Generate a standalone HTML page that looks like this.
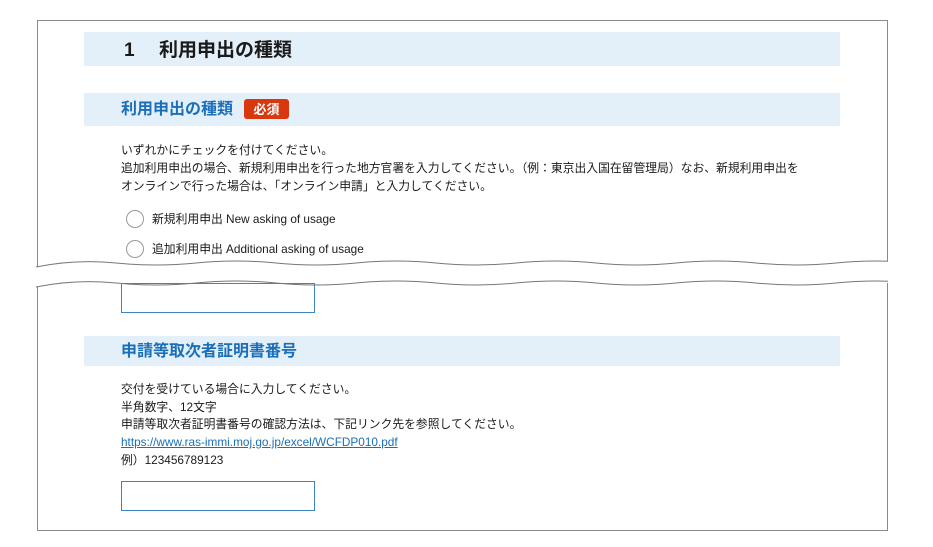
<!DOCTYPE html>
<html><head><meta charset="utf-8"><style>
body{margin:0;width:933px;height:547px;background:#fff;position:relative;overflow:hidden;font-family:"Liberation Sans","Noto Sans CJK JP",sans-serif;color:#1a1a1a}
.a{position:absolute}
.frame{left:37px;top:20px;width:849px;height:509px;border:1px solid #8a8a8a}
.bar{background:#e3eff9;left:84px;width:756px}
.t{font-size:11.8px;white-space:nowrap;line-height:18px}
.h{font-weight:bold;color:#1a6fb8;font-size:16px;line-height:20px}
.in{border:1px solid #3d85c0;width:194px;height:29px;box-sizing:border-box;left:121px}
.r{width:18px;height:18px;border:1px solid #999;border-radius:50%;left:126px;box-sizing:border-box;background:#fff}
</style></head><body>
<div class="a frame"></div>
<div class="a bar" style="top:32px;height:34px"></div>
<div class="a" style="left:124px;top:39px;font-size:19px;line-height:24px;font-weight:bold">1</div>
<div class="a" style="left:159px;top:39px;font-size:19px;line-height:24px;font-weight:bold;white-space:nowrap">利用申出の種類</div>
<div class="a bar" style="top:93px;height:33px"></div>
<div class="a h" style="left:121px;top:100px">利用申出の種類</div>
<div class="a" style="left:244px;top:99px;width:45px;height:20px;background:#d9380f;border-radius:3px;color:#fff;font-size:13px;font-weight:bold;text-align:center;line-height:21px">必須</div>
<div class="a t" style="left:121px;top:141px">いずれかにチェックを付けてください。<br>追加利用申出の場合、新規利用申出を行った地方官署を入力してください。（例：東京出入国在留管理局）なお、新規利用申出を<br>オンラインで行った場合は、「オンライン申請」と入力してください。</div>
<div class="a r" style="top:210px"></div>
<div class="a t" style="left:152px;top:210px">新規利用申出 New asking of usage</div>
<div class="a r" style="top:240px"></div>
<div class="a t" style="left:152px;top:240px">追加利用申出 Additional asking of usage</div>
<div class="a in" style="top:283px;height:30px"></div>
<svg class="a" style="left:0;top:250px" width="933" height="45">
<path d="M36 17 Q76 9 116 13 T196 13 T276 13 T356 13 T436 13 T516 13 T596 13 T676 13 T756 13 T836 13 T916 13 L916 33 T836 33 T756 33 T676 33 T596 33 T516 33 T436 33 T356 33 T276 33 T196 33 T116 33 Q76 29 36 37 Z" fill="#fff"/>
<path d="M36 17 Q76 9 116 13 T196 13 T276 13 T356 13 T436 13 T516 13 T596 13 T676 13 T756 13 T836 13 T916 13" fill="none" stroke="#777"/>
<path d="M36 37 Q76 29 116 33 T196 33 T276 33 T356 33 T436 33 T516 33 T596 33 T676 33 T756 33 T836 33 T916 33" fill="none" stroke="#777"/>
<rect x="888" y="0" width="45" height="45" fill="#fff"/>
</svg>
<div class="a bar" style="top:336px;height:30px"></div>
<div class="a h" style="left:121px;top:342px">申請等取次者証明書番号</div>
<div class="a t" style="left:121px;top:381px;line-height:17.7px">交付を受けている場合に入力してください。<br>半角数字、12文字<br>申請等取次者証明書番号の確認方法は、下記リンク先を参照してください。<br><span style="color:#1a6fb8;text-decoration:underline">https://www.ras-immi.moj.go.jp/excel/WCFDP010.pdf</span><br>例）123456789123</div>
<div class="a in" style="top:481px;height:30px"></div>
</body></html>
